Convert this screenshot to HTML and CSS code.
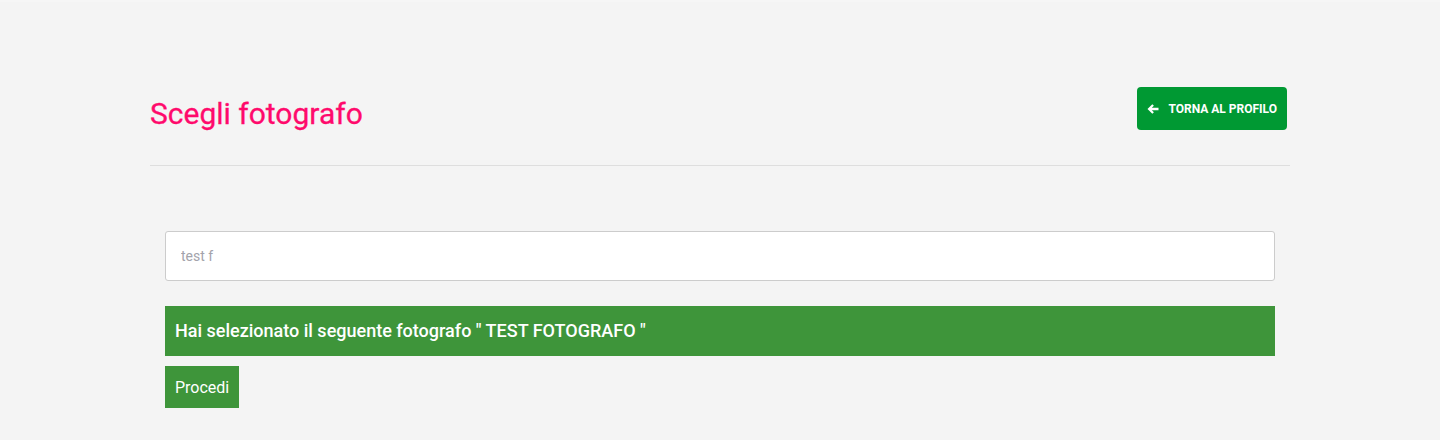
FILE: index.html
```html
<html>
	<head>
		<title>Scegli fotografo</title>
		<link rel="stylesheet" href="styles.css">
	</head>
	<body>
		<div class="container">
			<div class="page-header">
				<h1 class="titolo">Scegli fotografo</h1>
				<a class="btn-torna" href="#">
					<svg width="12" height="12" viewBox="0 0 12 12"><path d="M0.5 6 L5.3 1.2 L6.9 2.8 L4.8 4.8 H11.5 V7.2 H4.8 L6.9 9.2 L5.3 10.8 Z" fill="#fff"/></svg>
					TORNA AL PROFILO
				</a>
			</div>
			<hr class="linea">
			<div class="contenuto">
				<input type="text" class="campo" placeholder="test f">
				<div class="avviso">Hai selezionato il seguente fotografo " TEST FOTOGRAFO "</div>
				<button class="btn-procedi">Procedi</button>
			</div>
		</div>
	</body>
</html>
```
FILE: styles.css
```css
body {
	margin: 0;
	background-color: #f4f4f4;
	border-top: 2px solid #f6f6f6;
	font-family: Roboto, "Liberation Sans", sans-serif;
}

.container {
	width: 1140px;
	margin: 0 auto;
}

.page-header {
	display: flex;
	justify-content: space-between;
	align-items: center;
	padding-top: 83px;
	height: 47px;
}

.titolo {
	margin: 10px 0 0 0;
	font-size: 30px;
	font-weight: 400;
	color: #ff0a6c;
	-webkit-text-stroke: 0.3px #ff0a6c;
}

.btn-torna {
	display: flex;
	align-items: center;
	gap: 9px;
	height: 43px;
	padding: 0 10px 0 10px;
	margin-right: 3px;
	box-sizing: border-box;
	background-color: #009933;
	border-radius: 4px;
	color: #fff;
	font-size: 12px;
	font-weight: 700;
	text-decoration: none;
}

.linea {
	margin: 33px 0 0 0;
	border: 0;
	border-top: 1px solid #dedede;
}

.contenuto {
	padding: 65px 15px 0 15px;
}

.campo {
	display: block;
	width: 100%;
	height: 50px;
	box-sizing: border-box;
	padding: 0 15px;
	border: 1px solid #cccccc;
	border-radius: 3px;
	background: #fff;
	font-family: Roboto, "Liberation Sans", sans-serif;
	font-size: 14px;
	color: #555;
}

.campo::placeholder {
	color: #a3a3ab;
}

.avviso {
	margin-top: 25px;
	height: 50px;
	line-height: 50px;
	padding: 0 10px;
	background-color: #3e953a;
	color: #fff;
	font-size: 18px;
	font-weight: 500;
}

.btn-procedi {
	display: block;
	margin-top: 10px;
	height: 42px;
	padding: 0 10px;
	border: 0;
	background-color: #3e953a;
	color: #fff;
	font-family: Roboto, "Liberation Sans", sans-serif;
	font-size: 16px;
}
```
